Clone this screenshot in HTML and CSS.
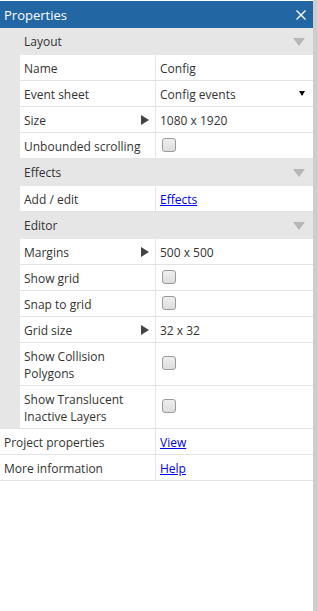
FILE: index.html
```html
<!DOCTYPE html>
<html>
<head>
<meta charset="utf-8">
<link rel="stylesheet" href="styles.css">
</head>
<body>
<div class="frame">
  <div class="panel">
    <div class="titlebar">
      <span class="title">Properties</span>
      <svg class="close" width="10" height="10" viewBox="0 0 10 10"><path d="M0.5 0.5 L9.5 9.5 M9.5 0.5 L0.5 9.5" stroke="#fff" stroke-width="1.4" fill="none"/></svg>
    </div>

    <div class="group">
      <div class="section"><span>Layout</span><i class="collapse"></i></div>
      <div class="row"><div class="label">Name</div><div class="value">Config</div></div>
      <div class="row"><div class="label">Event sheet</div><div class="value select">Config events<i class="drop"></i></div></div>
      <div class="row"><div class="label has-arrow">Size<i class="expand"></i></div><div class="value">1080 x 1920</div></div>
      <div class="row"><div class="label">Unbounded scrolling</div><div class="value"><span class="check"></span></div></div>

      <div class="section"><span>Effects</span><i class="collapse"></i></div>
      <div class="row"><div class="label">Add / edit</div><div class="value"><a href="#">Effects</a></div></div>

      <div class="section"><span>Editor</span><i class="collapse"></i></div>
      <div class="row"><div class="label has-arrow">Margins<i class="expand"></i></div><div class="value">500 x 500</div></div>
      <div class="row"><div class="label">Show grid</div><div class="value"><span class="check"></span></div></div>
      <div class="row"><div class="label">Snap to grid</div><div class="value"><span class="check"></span></div></div>
      <div class="row"><div class="label has-arrow">Grid size<i class="expand"></i></div><div class="value">32 x 32</div></div>
      <div class="row tall"><div class="label">Show Collision Polygons</div><div class="value"><span class="check"></span></div></div>
      <div class="row tall"><div class="label">Show Translucent Inactive Layers</div><div class="value"><span class="check"></span></div></div>
    </div>

    <div class="row top"><div class="label">Project properties</div><div class="value"><a href="#">View</a></div></div>
    <div class="row top"><div class="label">More information</div><div class="value"><a href="#">Help</a></div></div>
  </div>
  <div class="edge"></div>
</div>
</body>
</html>
```

FILE: styles.css
```css
html, body {
  margin: 0;
  padding: 0;
  background: #fff;
}
body {
  font-family: "Open Sans", "Noto Sans", sans-serif;
  font-size: 12px;
  color: #333;
}
.frame {
  display: flex;
  height: 611px;
}
.panel {
  flex: 1;
  display: flex;
  flex-direction: column;
  padding-top: 1px;
}
.edge {
  width: 4px;
  background: #cdcdcd;
}
.titlebar {
  height: 26px;
  background: #2366a4;
  color: #fff;
  display: flex;
  align-items: center;
  justify-content: space-between;
  padding: 1px 7px 0 4px;
  font-size: 13px;
}
.close {
  display: block;
}
.group {
  background: #e6e6e6;
  display: flex;
  flex-direction: column;
}
.section {
  height: 27px;
  display: flex;
  align-items: center;
  justify-content: space-between;
  padding: 0 8px 0 24px;
}
.collapse {
  width: 0;
  height: 0;
  border-left: 6px solid transparent;
  border-right: 6px solid transparent;
  border-top: 8px solid #b6b6b6;
}
.row {
  display: grid;
  grid-template-columns: 136px 1fr;
  background: #fff;
  margin-left: 20px;
  min-height: 25px;
  border-bottom: 1px solid #e3e3e3;
}
.row.top {
  margin-left: 0;
  grid-template-columns: 156px 1fr;
}
.row.tall {
  min-height: 42px;
}
.label {
  border-right: 1px solid #e3e3e3;
  padding: 5px 4px 3px;
  display: flex;
  align-items: center;
  line-height: 17px;
}
.label.has-arrow {
  justify-content: space-between;
  padding-right: 6px;
}
.expand {
  width: 0;
  height: 0;
  margin-top: -2px;
  border-top: 5px solid transparent;
  border-bottom: 5px solid transparent;
  border-left: 8px solid #444;
}
.value {
  padding: 2px 4px 0;
  display: flex;
  align-items: center;
}
.value.select {
  justify-content: space-between;
  padding-right: 8px;
}
.drop {
  width: 0;
  height: 0;
  margin-top: -2px;
  border-left: 3px solid transparent;
  border-right: 3px solid transparent;
  border-top: 5px solid #000;
}
.check {
  display: block;
  width: 12px;
  height: 12px;
  margin: -4px 0 0 2px;
  border: 1px solid #9a9a9a;
  border-radius: 3px;
  background: linear-gradient(#eeeeee, #dedede);
}
a {
  color: #0000ee;
  text-decoration: underline;
}
```
